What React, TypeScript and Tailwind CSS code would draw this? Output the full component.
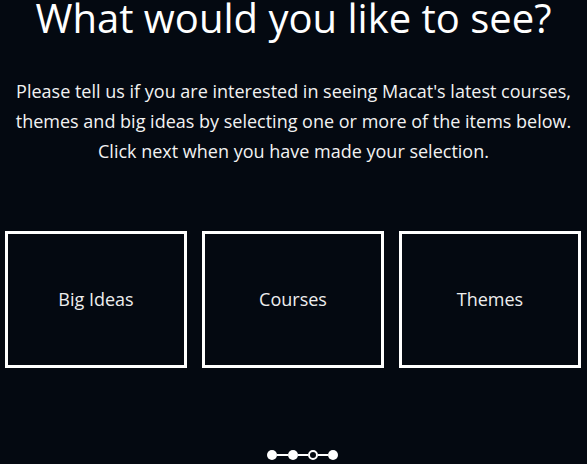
export default function App() {
  const items = ["Big Ideas", "Courses", "Themes"];
  return (
    <div className="w-[587px] h-[464px] overflow-hidden bg-[#040911] text-white relative" style={{ fontFamily: '"Open Sans", sans-serif' }}>
      <h1 className="text-[40px] leading-[40px] text-center mt-[-2px]">What would you like to see?</h1>
      <p className="text-[18px] leading-[30px] text-center mt-[38px] text-[#f2f2f2]">
        Please tell us if you are interested in seeing Macat's latest courses,<br />
        themes and big ideas by selecting one or more of the items below.<br />
        Click next when you have made your selection.
      </p>
      <div className="flex gap-[15px] px-[5px] mt-[65px]">
        {items.map((t) => (
          <div key={t} className="w-[182px] h-[137px] border-[3px] border-white flex items-center justify-center text-[18px] text-[#eeeeee]">
            {t}
          </div>
        ))}
      </div>
      <div className="flex items-center justify-center mt-[82px] pl-[17px]">
        <span className="w-[10px] h-[10px] rounded-full bg-white" />
        <span className="w-[11px] h-[2px] bg-white" />
        <span className="w-[10px] h-[10px] rounded-full bg-white" />
        <span className="w-[10px] h-[2px] bg-white" />
        <span className="w-[10px] h-[10px] rounded-full border-2 border-white" />
        <span className="w-[10px] h-[2px] bg-white" />
        <span className="w-[10px] h-[10px] rounded-full bg-white" />
      </div>
    </div>
  );
}
